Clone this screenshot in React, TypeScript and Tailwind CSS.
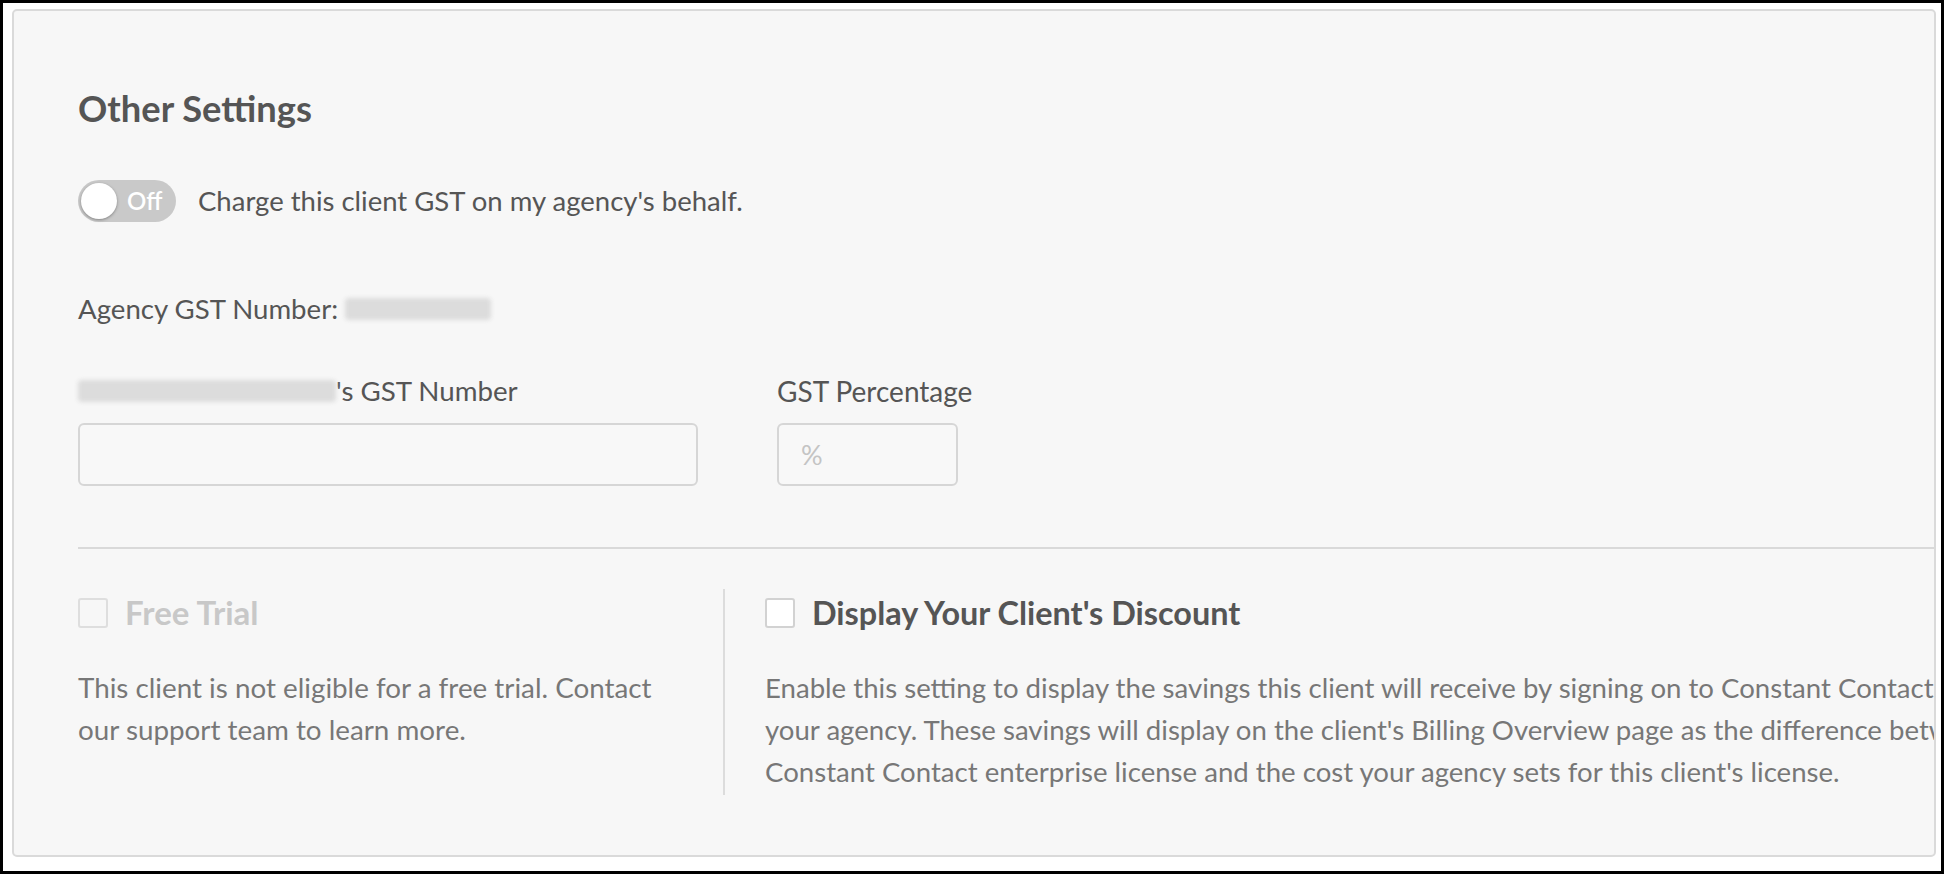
import React from "react";

const Redacted: React.FC<{ width: number }> = ({ width }) => (
  <span
    className="inline-block h-[22px] rounded-sm bg-[#dcdcdc] blur-[2px] align-middle"
    style={{ width }}
  />
);

const Toggle: React.FC = () => (
  <div className="relative flex h-[42px] w-[98px] shrink-0 items-center rounded-full bg-[#c9c9c9]">
    <span className="absolute left-[3px] top-[3px] h-[36px] w-[36px] rounded-full bg-white shadow-[0_1px_3px_rgba(0,0,0,0.35)]" />
    <span className="ml-[49px] text-[24px] font-semibold leading-none text-white">Off</span>
  </div>
);

const Checkbox: React.FC<{ disabled?: boolean }> = ({ disabled }) => (
  <span
    className={
      disabled
        ? "inline-block h-[30px] w-[30px] shrink-0 rounded-[3px] border-2 border-[#dedede] bg-[#f7f7f7]"
        : "inline-block h-[30px] w-[30px] shrink-0 rounded-[3px] border-2 border-[#d2d2d2] bg-white"
    }
  />
);

export default function App() {
  return (
    <div
      className="h-[874px] w-[1944px] bg-black p-[3px]"
      style={{ fontFamily: "Lato, 'Open Sans', sans-serif" }}
    >
      <div className="h-full w-full bg-white pb-[14px] pl-[9px] pr-[5px] pt-[6px]">
        <div className="h-full overflow-hidden rounded-[5px] border-2 border-[#dadada] bg-[#f7f7f7] pl-[64px] pt-[77px]">
          <h2 className="text-[36.3px] font-bold leading-[40px] text-[#555555]">Other Settings</h2>

          <div className="mt-[52px] flex items-center gap-[22px]">
            <Toggle />
            <span className="text-[27.5px] leading-[30px] text-[#555555]">
              Charge this client GST on my agency's behalf.
            </span>
          </div>

          <div className="mt-[72px] flex items-center gap-[7px] text-[27.6px] leading-[30px] text-[#555555]">
            <span>Agency GST Number:</span>
            <Redacted width={146} />
          </div>

          <div className="mt-[52px] flex gap-[79px]">
            <div className="flex w-[620px] flex-col">
              <label className="flex items-center text-[27.7px] leading-[30px] text-[#555555]">
                <Redacted width={258} />
                <span>'s GST Number</span>
              </label>
              <input
                className="mt-[17px] h-[63px] w-full rounded-[6px] border-2 border-[#d6d6d6] bg-[#f8f8f8] px-4 outline-none"
                type="text"
              />
            </div>
            <div className="flex flex-col">
              <label className="text-[28px] leading-[30px] text-[#555555]">GST Percentage</label>
              <input
                className="mt-[17px] h-[63px] w-[181px] rounded-[6px] border-2 border-[#d6d6d6] bg-[#f8f8f8] px-[22px] text-[27px] text-[#555555] outline-none placeholder:text-[#c4c4c4]"
                type="text"
                placeholder="%"
              />
            </div>
          </div>

          <div className="mt-[61px] h-[2px] w-[1900px] bg-[#d9d9d9]" />

          <div className="mt-[40px] flex">
            <div className="w-[645px] shrink-0 pr-[30px]">
              <div className="flex h-[48px] items-center gap-[17px]">
                <Checkbox disabled />
                <span className="text-[33px] font-bold text-[#c8c8c8]">Free Trial</span>
              </div>
              <p className="mt-[30px] whitespace-nowrap text-[27.8px] leading-[42px] text-[#777777]">
                This client is not eligible for a free trial. Contact
                <br />
                our support team to learn more.
              </p>
            </div>
            <div className="shrink-0 border-l-2 border-[#dcdcdc] pl-[40px] pb-[2px]">
              <div className="flex h-[48px] items-center gap-[17px]">
                <Checkbox />
                <span className="text-[32.4px] font-bold text-[#555555]">Display Your Client's Discount</span>
              </div>
              <p className="mt-[30px] whitespace-nowrap text-[27.6px] leading-[42px] text-[#777777]">
                Enable this setting to display the savings this client will receive by signing on to Constant Contact through
                <br />
                your agency. These savings will display on the client's Billing Overview page as the difference between the
                <br />
                Constant Contact enterprise license and the cost your agency sets for this client's license.
              </p>
            </div>
          </div>
        </div>
      </div>
    </div>
  );
}
